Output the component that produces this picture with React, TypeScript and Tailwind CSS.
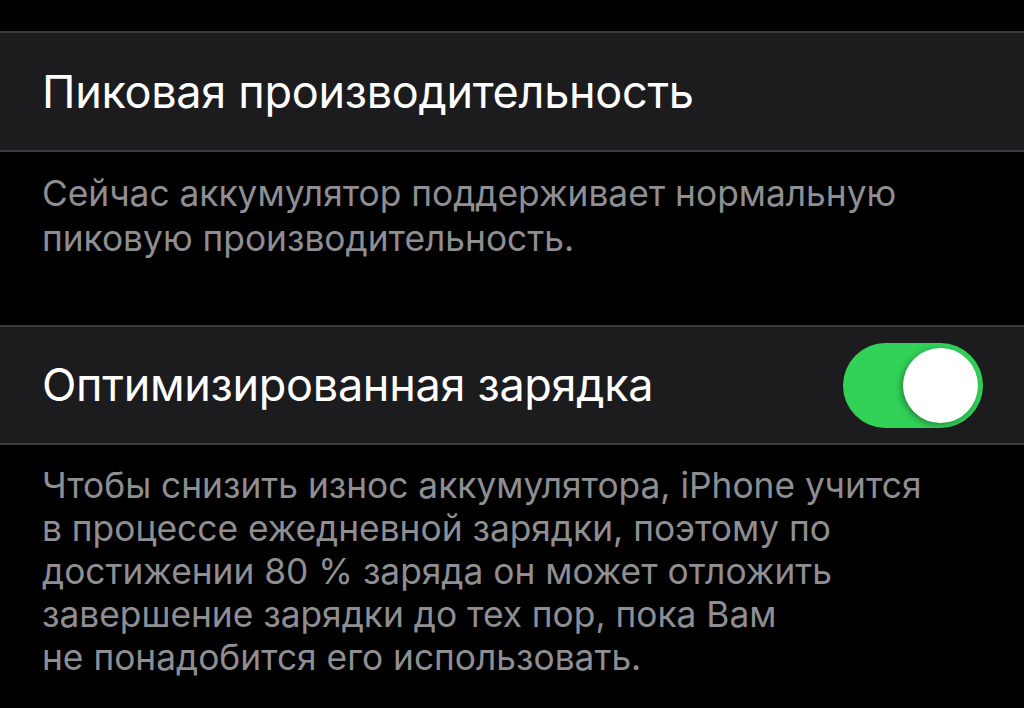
export default function App() {
  return (
    <div
      className="w-[1024px] h-[708px] bg-black overflow-hidden"
      style={{ fontFamily: 'Inter, "Noto Sans", sans-serif' }}
    >
      <div className="h-[31px]" />
      <div className="h-[121px] bg-[#1c1c1e] border-y-2 border-[#3a3a3c] flex items-center pl-[42px]">
        <span className="text-[45px] text-white tracking-[-0.3px]">Пиковая производительность</span>
      </div>
      <div className="h-[173px] pl-[42px] pt-[19px] text-[35.3px] leading-[45px] text-[#8e8e93]">
        Сейчас аккумулятор поддерживает нормальную
        <br />
        пиковую производительность.
      </div>
      <div className="h-[120px] bg-[#1c1c1e] border-y-2 border-[#3a3a3c] flex items-center justify-between pl-[42px] pr-[41px]">
        <span className="text-[45px] text-white tracking-[-0.3px]">Оптимизированная зарядка</span>
        <div className="w-[140px] h-[85px] rounded-full bg-[#32d158] flex items-center justify-end pr-[5px]">
          <div className="w-[75px] h-[75px] rounded-full bg-white shadow-[-2px_2px_6px_rgba(0,0,0,0.35)]" />
        </div>
      </div>
      <div className="pl-[42px] pt-[19px] text-[35.3px] leading-[43px] text-[#8e8e93]">
        Чтобы снизить износ аккумулятора, iPhone учится
        <br />
        в процессе ежедневной зарядки, поэтому по
        <br />
        достижении 80 % заряда он может отложить
        <br />
        завершение зарядки до тех пор, пока Вам
        <br />
        не понадобится его использовать.
      </div>
    </div>
  );
}
